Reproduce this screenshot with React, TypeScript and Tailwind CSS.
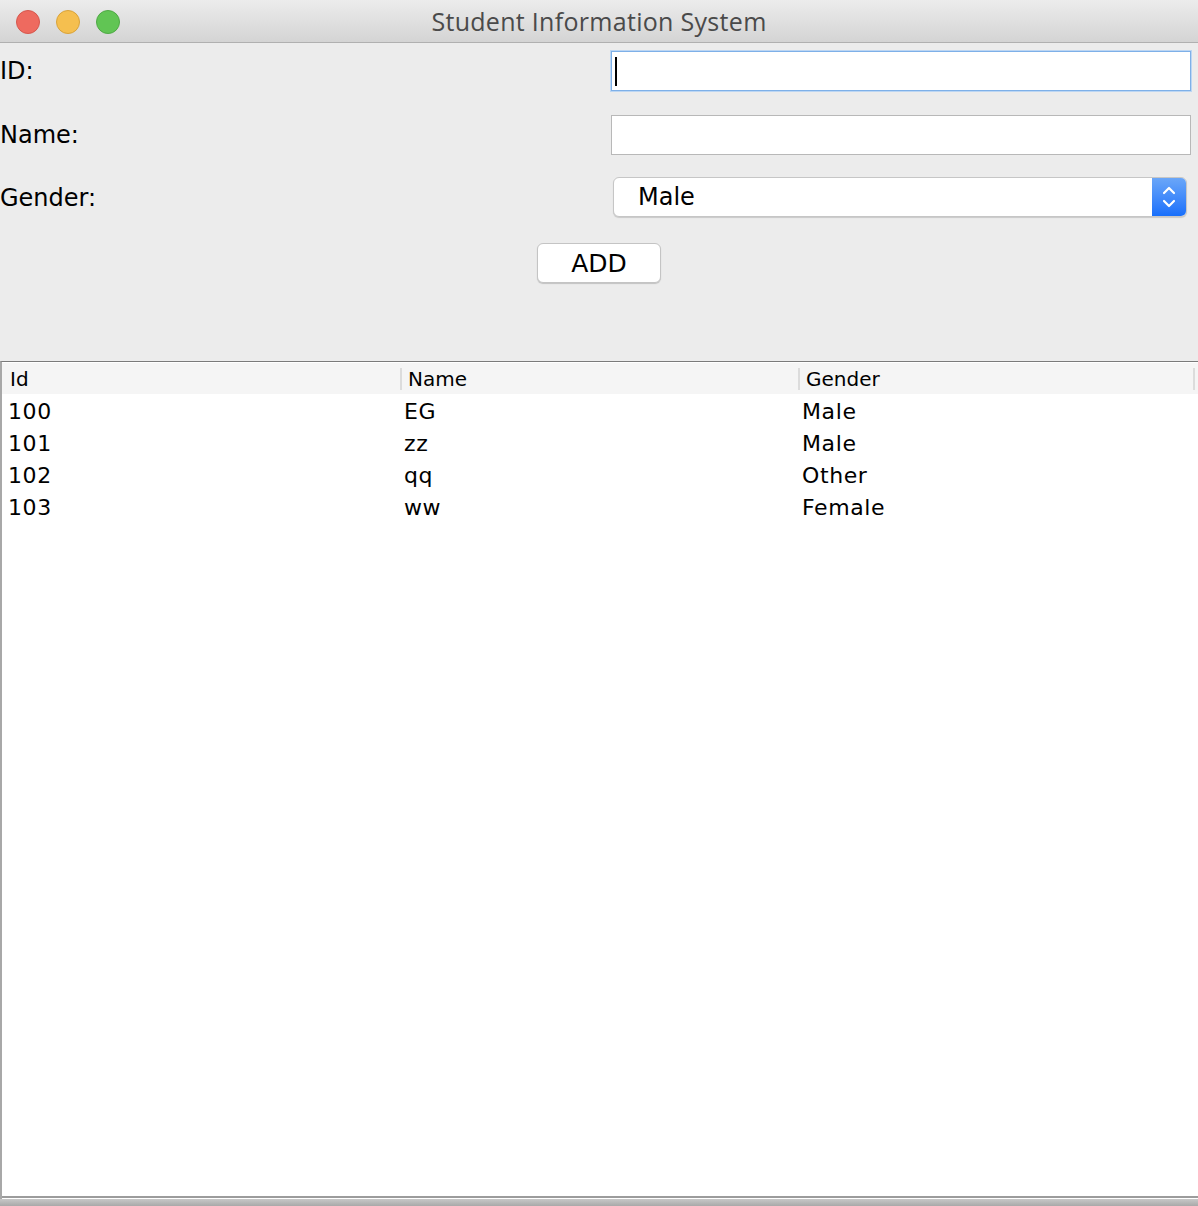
const students = [
  { id: '100', name: 'EG', gender: 'Male' },
  { id: '101', name: 'zz', gender: 'Male' },
  { id: '102', name: 'qq', gender: 'Other' },
  { id: '103', name: 'ww', gender: 'Female' },
];

const App = () => {
  return (
    <div className="w-[1198px] h-[1206px] flex flex-col bg-[#ececec] overflow-hidden font-['DejaVu_Sans',sans-serif] text-black">
      {/* Title bar */}
      <div className="relative h-[43px] shrink-0 flex items-center justify-center bg-gradient-to-b from-[#ececec] to-[#d4d4d4] border-b border-[#b0b0b0]">
        <div className="absolute left-[16px] top-[10px] flex gap-[16px]">
          <span className="w-[24px] h-[24px] rounded-full bg-[#ee6a5f] border border-[#d6574d]" />
          <span className="w-[24px] h-[24px] rounded-full bg-[#f5bf4f] border border-[#d9a33a]" />
          <span className="w-[24px] h-[24px] rounded-full bg-[#61c554] border border-[#4fa945]" />
        </div>
        <span className="font-['Open_Sans',sans-serif] text-[25px] text-[#4a4a4a] tracking-[0.3px] mt-[2px]">Student Information System</span>
      </div>

      {/* Form */}
      <div className="h-[318px] shrink-0 pt-[8px] flex flex-col">
        <div className="flex items-center h-[40px]">
          <span className="w-[611px] text-[24px]">ID:</span>
          <div className="w-[580px] h-[40px] bg-white border border-[#7eb0e8] shadow-[0_0_0_1px_#bcd6f3] flex items-center pl-[3px]">
            <span className="w-[2px] h-[29px] bg-black" />
          </div>
        </div>
        <div className="flex items-center h-[40px] mt-[24px]">
          <span className="w-[611px] text-[24px]">Name:</span>
          <div className="w-[580px] h-[40px] bg-white border border-[#b8b8b8]" />
        </div>
        <div className="flex items-center h-[40px] mt-[22px]">
          <span className="w-[613px] text-[24px] mt-[2px]">Gender:</span>
          <div className="w-[574px] h-[40px] bg-white rounded-[6px] border border-[#c6c6c6] shadow-[0_1px_1px_rgba(0,0,0,0.15)] flex items-center overflow-hidden">
            <span className="flex-1 pl-[24px] text-[24px]">Male</span>
            <div className="w-[34px] h-full bg-gradient-to-b from-[#6aa6f8] to-[#176ffb] flex items-center justify-center">
              <svg width="16" height="26" viewBox="0 0 16 26" fill="none" stroke="white" strokeWidth="2.2" strokeLinecap="round" strokeLinejoin="round">
                <path d="M3 9 L8 4 L13 9" />
                <path d="M3 17 L8 22 L13 17" />
              </svg>
            </div>
          </div>
        </div>
        <div className="flex justify-center mt-[26px]">
          <button className="w-[124px] h-[40px] bg-white rounded-[6px] border border-[#c4c4c4] shadow-[0_1px_1px_rgba(0,0,0,0.18)] text-[25px] leading-none">
            ADD
          </button>
        </div>
      </div>

      {/* Table */}
      <div className="flex-1 flex flex-col bg-white border-t border-[#7a7a7a] border-l-2 border-l-[#a8a8a8]">
        <div className="h-[31px] mt-[1px] bg-[#f5f5f5] grid grid-cols-[398px_398px_397px] items-center text-[20px]">
          <div className="pl-[8px]">Id</div>
          <div className="pl-[6px] border-l-2 border-[#dcdcdc] h-[22px] flex items-center">Name</div>
          <div className="pl-[6px] border-l-2 border-r-2 border-[#dcdcdc] h-[22px] flex items-center">Gender</div>
        </div>
        <div className="flex-1 pt-[1px]">
          {students.map((s) => (
            <div key={s.id} className="h-[32px] grid grid-cols-[398px_398px_398px] items-center text-[22px] tracking-[0.6px]">
              <div className="pl-[6px]">{s.id}</div>
              <div className="pl-[4px]">{s.name}</div>
              <div className="pl-[4px]">{s.gender}</div>
            </div>
          ))}
        </div>
        <div className="h-[3px] bg-[#9c9c9c] border-b border-white" />
        <div className="h-[7px] bg-gradient-to-b from-[#c8c8c8] to-[#a9a9a9] -ml-[2px]" />
      </div>
    </div>
  );
};

export default App;
